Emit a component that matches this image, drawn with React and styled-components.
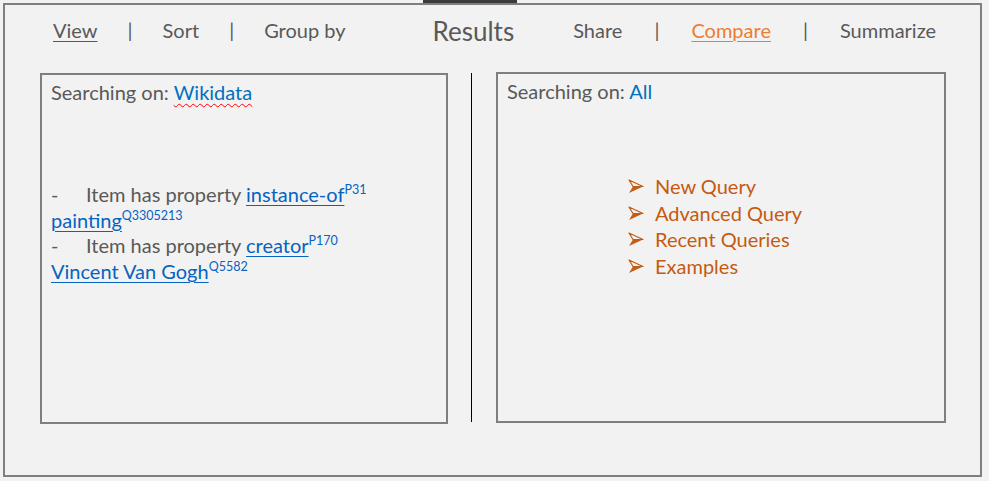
import styled, { createGlobalStyle } from 'styled-components';

// Office-like mock of a query results screen

const GlobalStyle = createGlobalStyle`
  html, body {
    margin: 0;
    padding: 0;
    background: #f2f2f2;
    font-family: 'Lato', 'Open Sans', sans-serif;
  }
`;

const GRAY = '#595959';
const BORDER = '#7f7f7f';
const BLUE = '#0563c1';
const ORANGE = '#c55a11';

const Page = styled.div`
  width: 989px;
  height: 481px;
  background: #f2f2f2;
  display: flex;
  flex-direction: column;
  overflow: hidden;
`;

const TopTab = styled.div`
  width: 94px;
  height: 3px;
  margin-left: 423px;
  background: #3b3b3b;
  flex-shrink: 0;
`;

const Frame = styled.div`
  width: 975px;
  height: 470px;
  margin-left: 3px;
  border: 2px solid ${BORDER};
  display: flex;
  flex-direction: column;
`;

const NavBar = styled.nav`
  height: 49px;
  display: flex;
  align-items: center;
  padding-left: 48px;
  color: ${GRAY};
  font-size: 20px;
`;

const NavGroup = styled.div`
  display: flex;
  align-items: center;
  gap: ${p => p.$gap || 30}px;
`;

const NavItem = styled.span`
  color: ${p => (p.$accent ? '#ed7d31' : GRAY)};
  text-decoration: ${p => (p.$underline ? 'underline' : 'none')};
  text-underline-offset: 3px;
  text-decoration-thickness: 1px;
`;

const Sep = styled.span`
  color: ${GRAY};
`;

const Title = styled.h1`
  margin: 0 59px 0 87px;
  font-weight: 400;
  font-size: 26px;
  color: ${GRAY};
  position: relative;
  top: 1px;
`;

const Body = styled.div`
  display: flex;
  align-items: flex-start;
  padding-left: 35px;
  margin-top: 18px;
`;

const Panel = styled.section`
  box-sizing: border-box;
  width: ${p => p.$width}px;
  height: 351px;
  border: 2px solid ${BORDER};
  padding: 4px 9px;
  margin-top: ${p => p.$offset || 0}px;
  color: ${GRAY};
  font-size: 20px;
  line-height: 26px;
`;

const Divider = styled.div`
  width: 1px;
  height: 349px;
  background: #000;
  margin: 1px 24px 0 23px;
`;

const Source = styled.span`
  color: #0070c0;
  text-decoration: ${p => (p.$misspelled ? 'underline wavy #ff0000' : 'none')};
  text-decoration-thickness: 1px;
  text-underline-offset: 3px;
`;

const Criteria = styled.div`
  margin-top: 76px;
`;

const CriteriaLine = styled.div`
  white-space: nowrap;
  height: 25.7px;
`;

const Dash = styled.span`
  display: inline-block;
  width: 35px;
`;

const Link = styled.span`
  color: ${BLUE};
  text-decoration: underline;
  text-underline-offset: 3px;
  text-decoration-thickness: 1px;
`;

const Sup = styled.sup`
  color: ${BLUE};
  font-size: 12.5px;
  line-height: 0;
  vertical-align: 8px;
`;

const QueryList = styled.ul`
  list-style: none;
  margin: 69px 0 0 121px;
  padding: 0;
  color: ${ORANGE};
  line-height: 26.7px;
`;

const QueryItem = styled.li`
  display: flex;
  align-items: center;
  gap: 11px;
`;

const Arrow = () => (
  <svg width="16" height="15" viewBox="0 0 16 15" aria-hidden="true">
    <path d="M1 1 L15 7.5 L5 7.5 Z" fill="none" stroke={ORANGE} strokeWidth="1.2" strokeLinejoin="round" />
    <path d="M5 7.5 L15 7.5 L1 14 Z" fill={ORANGE} />
  </svg>
);

const criteria = [
  { prop: 'instance-of', pid: 'P31', value: 'painting', qid: 'Q3305213' },
  { prop: 'creator', pid: 'P170', value: 'Vincent Van Gogh', qid: 'Q5582' },
];

const queries = ['New Query', 'Advanced Query', 'Recent Queries', 'Examples'];

export default function App() {
  return (
    <Page>
      <GlobalStyle />
      <TopTab />
      <Frame>
        <NavBar>
          <NavGroup $gap={30}>
            <NavItem $underline>View</NavItem>
            <Sep>|</Sep>
            <NavItem>Sort</NavItem>
            <Sep>|</Sep>
            <NavItem>Group by</NavItem>
          </NavGroup>
          <Title>Results</Title>
          <NavGroup $gap={32}>
            <NavItem>Share</NavItem>
            <Sep>|</Sep>
            <NavItem $accent $underline>Compare</NavItem>
            <Sep>|</Sep>
            <NavItem>Summarize</NavItem>
          </NavGroup>
        </NavBar>

        <Body>
          <Panel $width={408} $offset={1}>
            Searching on: <Source $misspelled>Wikidata</Source>
            <Criteria>
              {criteria.map(c => (
                <div key={c.pid}>
                  <CriteriaLine>
                    <Dash>-</Dash>Item has property <Link>{c.prop}</Link>
                    <Sup>{c.pid}</Sup>
                  </CriteriaLine>
                  <CriteriaLine>
                    <Link>{c.value}</Link>
                    <Sup>{c.qid}</Sup>
                  </CriteriaLine>
                </div>
              ))}
            </Criteria>
          </Panel>
          <Divider />
          <Panel $width={450}>
            Searching on: <Source>All</Source>
            <QueryList>
              {queries.map(q => (
                <QueryItem key={q}>
                  <Arrow />
                  {q}
                </QueryItem>
              ))}
            </QueryList>
          </Panel>
        </Body>
      </Frame>
    </Page>
  );
}
